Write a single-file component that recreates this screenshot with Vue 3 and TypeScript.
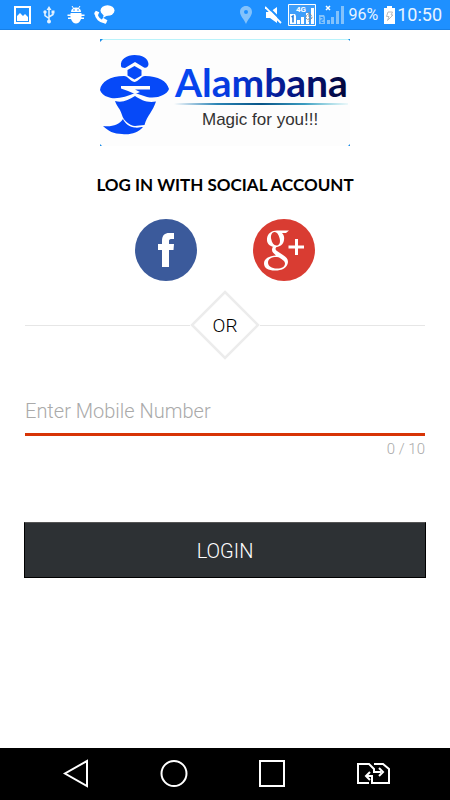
<script setup lang="ts">
import { computed, ref } from 'vue'

const maxLength = 10
const mobile = ref('')
const counter = computed(() => `${mobile.value.length} / ${maxLength}`)
</script>

<template>
  <div class="screen">
    <header class="status">
      <div class="group left">
        <svg width="17" height="18" viewBox="0 0 17 18" aria-hidden="true">
          <path fill="none" stroke="#fff" stroke-width="2" d="M1 1H16V17H1Z" />
          <path fill="#fff" d="M3 15V10L6 7L9 10L11 8L14 11V15Z" />
        </svg>
        <svg width="12" height="18" viewBox="0 0 12 18" aria-hidden="true">
          <g fill="none" stroke="#e4f2ff" stroke-width="1.5">
            <path d="M6 3V15M2 6V9.5L6 12.5M10 6V8.5L6 11" />
          </g>
          <g fill="#e4f2ff">
            <path d="M6 0L8.500 4H3.500Z" />
            <circle cx="6" cy="15.500" r="2" />
            <circle cx="2" cy="6" r="1.700" />
            <path d="M8.500 4.500H11.500V7.500H8.500Z" />
          </g>
        </svg>
        <svg width="18" height="18" viewBox="0 0 18 18" aria-hidden="true">
          <path stroke="#fff" stroke-width="1" d="M5 0L7 3M13 0L11 3" />
          <path fill="#fff" d="M4 6C4 3 6 1.500 9 1.500S14 3 14 6Z" />
          <path fill="#fff" d="M3.500 7H14.500V8.500H17.500V10H14.500V11.500H17V13H14C13 16 11 17.500 9 17.500S5 16 4 13H1V11.500H3.500V10H.5V8.500H3.500Z" />
          <circle cx="7" cy="4" r=".8" fill="#1e90ff" />
          <circle cx="11" cy="4" r=".8" fill="#1e90ff" />
        </svg>
        <svg width="21" height="19" viewBox="0 0 21 19" aria-hidden="true">
          <ellipse cx="13.500" cy="5.500" rx="7" ry="5.200" fill="#fff" />
          <path fill="#fff" d="M10 8L9 13L14 10Z" />
          <path fill="none" stroke="#fff" stroke-width="3" stroke-linecap="round" d="M2 8C2.500 13 6 16.500 11 17" />
          <path stroke="#fff" stroke-width="4" d="M1 7.500L4.500 9M8 14.500L12.500 17" />
        </svg>
      </div>
      <div class="group right">
        <svg class="pin" width="12" height="18" viewBox="0 0 12 18" aria-hidden="true">
          <path fill="#83c2fb" fill-rule="evenodd" d="M6 0C9.500 0 12 2.500 12 6C12 10 8 13 6 18C4 13 0 10 0 6C0 2.500 2.500 0 6 0ZM6 4A2 2 0 1 0 6 8A2 2 0 1 0 6 4Z" />
        </svg>
        <svg class="mute" width="18" height="18" viewBox="0 0 18 18" aria-hidden="true">
          <path fill="#fff" d="M1 6H5L12 1V17L5 12H1Z" />
          <path stroke="#1e90ff" stroke-width="2" d="M2 0L18 16" />
          <path stroke="#fff" stroke-width="1.800" d="M0 1L16 17" />
        </svg>
        <svg class="sim" width="28" height="22" viewBox="0 0 28 22" aria-hidden="true">
          <path fill="#3f9efa" stroke="#fff" d="M.5.5H27.500V21.500H.5Z" />
          <path fill="#fff" d="M2 10H7L8 12V20H2ZM9 16H12V20H9ZM13 13H16V20H13ZM18 9H21V20H18ZM23 4H26V20H23Z" />
          <path stroke="#1e78d8" stroke-width="1.500" d="M3.500 13L5 12V18.500" fill="none" />
          <circle cx="21" cy="13" r="3" fill="none" stroke="#888" stroke-dasharray="2 1" />
          <path d="M21 8V18" stroke="#888" stroke-dasharray="2 1" />
          <text x="8" y="8" fill="#fff" font-family="Roboto, sans-serif" font-size="8" font-weight="700">4G</text>
        </svg>
        <svg class="sim" width="26" height="20" viewBox="0 0 26 20" aria-hidden="true">
          <path fill="#83c2fb" d="M1 10H6L7 12V19H1ZM9 15H12V19H9ZM13 12H16V19H13ZM18 6H21V19H18ZM23 1H26V19H23Z" />
          <path d="M2.500 12.500H5V15H3V17.500H5.500" fill="none" stroke="#1e90ff" />
          <path d="M8 1L12 5M12 1L8 5" stroke="#fff" stroke-width="1.500" />
        </svg>
        <span class="percent">96%</span>
        <svg class="battery" width="11" height="18" viewBox="0 0 11 18" aria-hidden="true">
          <path fill="#fff" d="M3 0H8V2H11V18H0V2H3Z" />
          <path fill="none" stroke="#bbb" d="M5 6H8.500L7 9H9L3.500 14.500L5 10.500H2.500L4 6Z" />
        </svg>
        <time class="clock">10:50</time>
      </div>
    </header>

    <main class="content">
      <svg class="logo" width="250" height="107" viewBox="0 0 250 107" role="img" aria-label="Alambana Magic for you!!!">
        <defs>
          <linearGradient id="name" x1="0" x2="1">
            <stop offset="0" stop-color="#0649f5" />
            <stop offset=".35" stop-color="#0638dc" />
            <stop offset=".65" stop-color="#05188a" />
            <stop offset="1" stop-color="#020638" />
          </linearGradient>
          <linearGradient id="rule" x1="0" x2="1">
            <stop offset="0" stop-color="#1675b5" stop-opacity="0" />
            <stop offset=".25" stop-color="#2a84b4" />
            <stop offset=".5" stop-color="#075487" />
            <stop offset=".75" stop-color="#3b9cc0" />
            <stop offset="1" stop-color="#55c5d6" stop-opacity=".1" />
          </linearGradient>
        </defs>
        <path fill="#fdfdfd" d="M0 0H250V107H0Z" />
        <path stroke="#b9f3fb" d="M0 .5H250" />
        <path fill="#1b8de8" d="M0 0H3L0 3ZM0 107V105L2 107ZM248 0H250V2ZM248 107H250V105Z" />
        <g fill="#0649f8">
          <path d="M21 27C20 20 27 16 34.500 16C42 16 48 19 48.500 25C48.500 28 46 29.500 44 28.500L35 23L25 29C22 29 21 28 21 27Z" />
          <path d="M34.500 27L41.500 31V36.500L34.500 40.500L27.500 36.500V31Z" />
          <path d="M0 51C1 43 10 37 24 37C28 37 30 42 34.500 43C39 42 41 37 45 37C58 37 67 42 69 50C67 56 57 60 47 58L35 54C26 58 15 61 8 58C4 57 1 54 0 51Z" />
          <path d="M15 62C23 64 28 61 35 57C41 61 47 64 56 62.500C53 72 47 77 44.500 86C39 86 35 88 31 86C25 83 23 79 22 76C20 69 17 68 15 62Z" />
          <path d="M3 87C12 88 19 86 23 80C25 85 30 88 35 88.500C38 89 41 88 43 88C38 94 30 96 22 95C14 95 8 92 3 87Z" />
        </g>
        <path fill="#fdfdfd" d="M21 47H50V50.500H35L40 53L35 55L28 52L21 49.500Z" />
        <text class="name" x="75" y="58" fill="url(#name)">Alambana</text>
        <path fill="url(#rule)" d="M74 64H248V66H74Z" />
        <text class="tagline" x="102" y="86">Magic for you!!!</text>
      </svg>

      <h1 class="title">LOG IN WITH SOCIAL ACCOUNT</h1>

      <div class="social">
        <button type="button" aria-label="Facebook">
          <svg width="62" height="62" viewBox="0 0 62 62">
            <circle cx="31" cy="31" r="31" fill="#3b5a9b" />
            <path fill="#fff" d="M27 48V31H23V25H27V22C27 16 30 14 34 14H39V20H36C34.500 20 34 21 34 22V25H39L38.500 31H34V48Z" />
          </svg>
        </button>
        <button type="button" aria-label="Google Plus">
          <svg width="62" height="62" viewBox="0 0 62 62">
            <circle cx="31" cy="31" r="31" fill="#d93c32" />
            <g fill="#fff" fill-rule="evenodd">
              <path d="M24 11.500H36L33 14H29C31 16 31.500 18 31 21C30.500 26 26 28.500 21.500 28C16 27.500 13.500 24 14 19.500C14.500 14.500 18.500 11.500 24 11.500ZM21.500 13C18.500 13.500 17.500 16.500 18.200 20C19 24.500 21 26.800 24 26.500C27 26 27.500 22.500 26.500 19C25.500 15 23.500 12.700 21.500 13Z" />
              <path d="M20 27.500H24C22 29 22 30.500 24 32L30 36C33 38 35 39.500 35 43C34.500 49 29 51.500 22 51.500C15 51.500 11 49 11 44.500C11 39.500 16 37 23 36.500C20 34 17.500 32 20 27.500ZM24 38C18 38 15 40 15 43.500C15 47 18.500 49.500 24 49.500C29 49.500 32 47.500 32 44.500C32 42 29.500 41 27 39C26 38.300 25 38 24 38Z" />
              <path d="M42 20H45V26.500H51V29.500H45V36H42V29.500H35.500V26.500H42Z" />
            </g>
          </svg>
        </button>
      </div>

      <div class="divider">
        <span class="line"></span>
        <span class="diamond">
          <svg width="70" height="70" viewBox="0 0 70 70" aria-hidden="true">
            <path fill="#fff" stroke="#ececec" stroke-width="2.500" d="M35 2L68 35L35 68L2 35Z" />
          </svg>
          <span class="or">OR</span>
        </span>
        <span class="line"></span>
      </div>

      <form @submit.prevent>
        <input v-model="mobile" type="tel" :maxlength="maxLength" placeholder="Enter Mobile Number" aria-label="Enter Mobile Number" />
        <output class="counter">{{ counter }}</output>
        <button class="login" type="submit">LOGIN</button>
      </form>
    </main>

    <nav class="nav">
      <button type="button" aria-label="Back">
        <svg width="28" height="30" viewBox="0 0 28 30"><path d="M25 2V27L3 14.500Z" /></svg>
      </button>
      <button type="button" aria-label="Home">
        <svg width="28" height="30" viewBox="0 0 28 30"><circle cx="14" cy="14.500" r="12.500" /></svg>
      </button>
      <button type="button" aria-label="Recent apps">
        <svg width="28" height="30" viewBox="0 0 28 30"><path d="M2 2H26V27H2Z" /></svg>
      </button>
      <button type="button" aria-label="Switch SIM">
        <svg width="34" height="30" viewBox="0 0 34 30">
          <path d="M13 24H2V5H13L18 10V13H25M18 5H27L33 10V24H16V17H10" />
          <path d="M23 9L27 13L23 17M14 13L10 17L14 21" />
        </svg>
      </button>
    </nav>
  </div>
</template>

<style>
body {
  margin: 0;
  background: #fff;
}
</style>

<style scoped>
.screen {
  min-height: 100vh;
  display: flex;
  flex-direction: column;
  background: #fff;
  color: #000;
  font-family: Roboto, sans-serif;
}

button {
  padding: 0;
  border: 0;
  background: none;
  cursor: pointer;
}

svg {
  display: block;
}

.status {
  box-sizing: border-box;
  height: 30px;
  padding: 0 8px 0 14px;
  display: flex;
  justify-content: space-between;
  background: #1e90ff;
  border-bottom: 1px solid #1880e6;
  color: #e8f4ff;
}

.group {
  display: flex;
  align-items: center;
}

.left {
  gap: 12px;
}

.left svg:last-child {
  margin-left: -3px;
}

.mute {
  margin-left: 13px;
}

.sim {
  margin-left: 5px;
}

.sim + .sim {
  margin-left: 2px;
}

.percent {
  margin-left: 4px;
  font-size: 16px;
}

.battery {
  margin: 0 2px 0 6px;
}

.clock {
  font-size: 18px;
}

.content {
  flex: 1;
  padding: 9px 24px 0;
  display: flex;
  flex-direction: column;
}

.logo {
  align-self: center;
}

.name {
  font: 700 39px Lato, sans-serif;
}

.tagline {
  font: 17px "Liberation Sans", sans-serif;
  fill: #333;
}

.title {
  margin: 27px 0 0;
  text-align: center;
  font: 700 17px/24px Lato, sans-serif;
}

.social {
  margin-top: 22px;
  display: flex;
  justify-content: center;
  gap: 56px;
}

.divider {
  margin: 9px 1px 0;
  display: flex;
  align-items: center;
}

.line {
  flex: 1;
  height: 1px;
  background: #e6e6e6;
}

.diamond {
  display: grid;
  place-items: center;
}

.diamond > * {
  grid-area: 1 / 1;
}

.or {
  font-size: 19px;
  font-weight: 300;
}

form {
  margin-top: 34px;
  display: flex;
  flex-direction: column;
}

input {
  margin: 0 1px;
  padding: 0 0 6px;
  height: 33px;
  border: 0;
  border-bottom: 3px solid #d73406;
  outline: 0;
  border-radius: 0;
  background: none;
  font: 300 20px Roboto, sans-serif;
}

input::placeholder {
  color: #aaa;
  opacity: 1;
}

.counter {
  margin: 3px 1px 0;
  text-align: right;
  color: #aaa;
  font-size: 15px;
  font-weight: 300;
  line-height: 20px;
}

.login {
  margin-top: 63px;
  padding-top: 2px;
  height: 56px;
  border: 1px solid #000;
  border-top-color: #555;
  background: #2d3134;
  color: #fff;
  font: 300 20px Roboto, sans-serif;
}

.nav {
  height: 52px;
  padding: 0 60px 0 62px;
  display: flex;
  align-items: center;
  justify-content: space-between;
  background: #000;
}

.nav svg {
  fill: none;
  stroke: #fff;
  stroke-width: 2;
}
</style>
